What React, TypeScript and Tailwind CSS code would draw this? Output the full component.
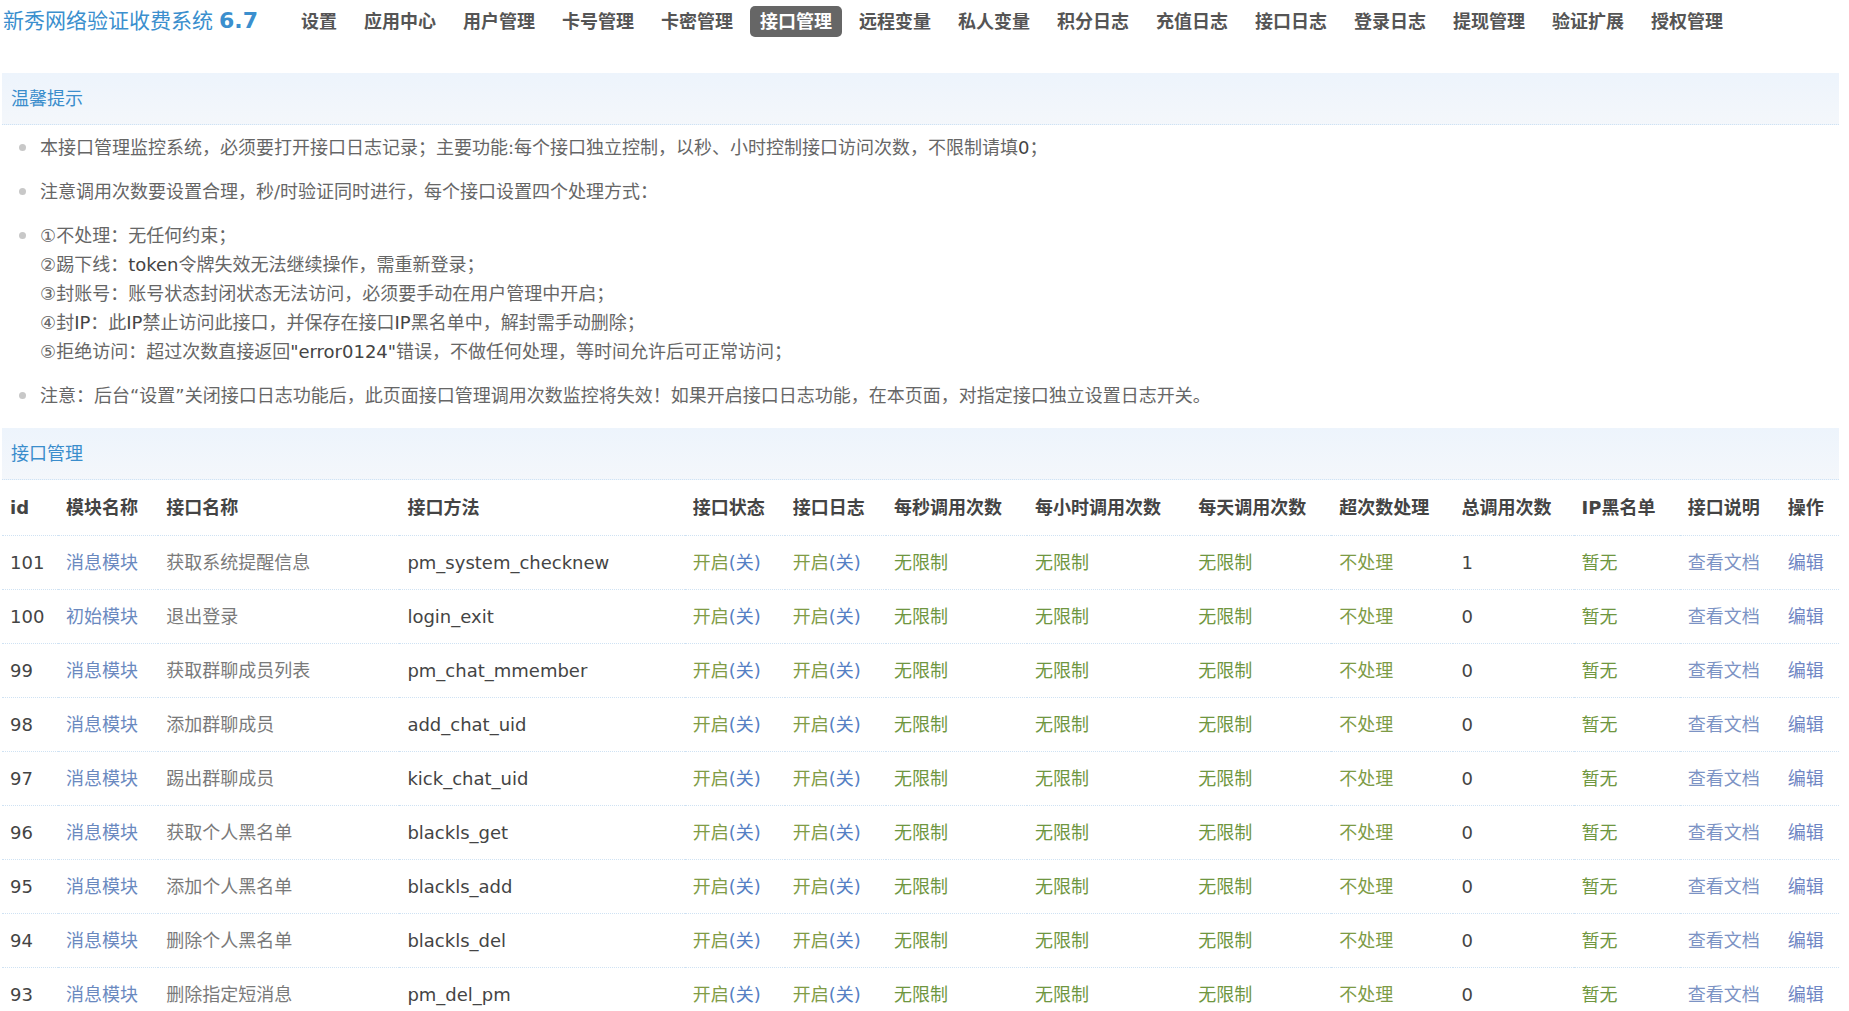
import React from "react";

const navItems = [
  "设置",
  "应用中心",
  "用户管理",
  "卡号管理",
  "卡密管理",
  "接口管理",
  "远程变量",
  "私人变量",
  "积分日志",
  "充值日志",
  "接口日志",
  "登录日志",
  "提现管理",
  "验证扩展",
  "授权管理",
];

const rows = [
  { id: 101, mod: "消息模块", name: "获取系统提醒信息", method: "pm_system_checknew", total: 1 },
  { id: 100, mod: "初始模块", name: "退出登录", method: "login_exit", total: 0 },
  { id: 99, mod: "消息模块", name: "获取群聊成员列表", method: "pm_chat_mmember", total: 0 },
  { id: 98, mod: "消息模块", name: "添加群聊成员", method: "add_chat_uid", total: 0 },
  { id: 97, mod: "消息模块", name: "踢出群聊成员", method: "kick_chat_uid", total: 0 },
  { id: 96, mod: "消息模块", name: "获取个人黑名单", method: "blackls_get", total: 0 },
  { id: 95, mod: "消息模块", name: "添加个人黑名单", method: "blackls_add", total: 0 },
  { id: 94, mod: "消息模块", name: "删除个人黑名单", method: "blackls_del", total: 0 },
  { id: 93, mod: "消息模块", name: "删除指定短消息", method: "pm_del_pm", total: 0 },
];

const headers = [
  "id",
  "模块名称",
  "接口名称",
  "接口方法",
  "接口状态",
  "接口日志",
  "每秒调用次数",
  "每小时调用次数",
  "每天调用次数",
  "超次数处理",
  "总调用次数",
  "IP黑名单",
  "接口说明",
  "操作",
];

function SectionTitle({ title }: { title: string }) {
  return (
    <div className="h-[52px] flex items-center pl-[9px] bg-gradient-to-b from-[#edf4fc] to-[#f4f7fb] border-b border-dotted border-[#cfe2f3] text-[18px] text-[#3a8dcc]">
      {title}
    </div>
  );
}

function Toggle() {
  return (
    <span>
      <span className="text-[#819c45]">开启</span>
      <span className="text-[#5580c4]">(关)</span>
    </span>
  );
}

function Dot() {
  return <span className="absolute left-[17px] top-[11px] w-[7px] h-[7px] rounded-full bg-[#c8c8c8]" />;
}

export default function App() {
  return (
    <div className="min-h-screen bg-white pl-[2px] pr-[10px] font-['DejaVu_Sans','Noto_Sans_CJK_SC',sans-serif] text-[18px] text-[#666]">
      <div className="h-[42px] flex items-center">
        <div className="pl-[1px] text-[#3b8fce] whitespace-nowrap">
          <span className="text-[21px]">新秀网络验证收费系统</span>
          <span className="ml-[6px] text-[22px] font-bold">6.7</span>
        </div>
        <nav className="ml-[33px] flex items-center gap-[7px]">
          {navItems.map((n) => (
            <span
              key={n}
              className={`h-[31px] px-[10px] flex items-center rounded-[5px] text-[18px] font-bold whitespace-nowrap ${
                n === "接口管理" ? "bg-[#666] text-white" : "text-[#555]"
              }`}
            >
              {n}
            </span>
          ))}
        </nav>
      </div>

      <div className="mt-[31px]">
        <SectionTitle title="温馨提示" />
        <ul className="pt-[8px] leading-[29px]">
          <li className="relative pl-[38px] mb-[15px]">
            <Dot />
            本接口管理监控系统，必须要打开接口日志记录；主要功能:每个接口独立控制，以秒、小时控制接口访问次数，不限制请填<span className="text-[#444]">0</span>；
          </li>
          <li className="relative pl-[38px] mb-[15px]">
            <Dot />
            注意调用次数要设置合理，秒/时验证同时进行，每个接口设置四个处理方式：
          </li>
          <li className="relative pl-[38px] mb-[15px]">
            <Dot />
            ①不处理：无任何约束；
            <br />
            ②踢下线：<span className="text-[#444]">token</span>令牌失效无法继续操作，需重新登录；
            <br />
            ③封账号：账号状态封闭状态无法访问，必须要手动在用户管理中开启；
            <br />
            ④封<span className="text-[#444]">IP</span>：此<span className="text-[#444]">IP</span>禁止访问此接口，并保存在接口<span className="text-[#444]">IP</span>黑名单中，解封需手动删除；
            <br />
            ⑤拒绝访问：超过次数直接返回<span className="text-[#444]">"error0124"</span>错误，不做任何处理，等时间允许后可正常访问；
          </li>
          <li className="relative pl-[38px]">
            <Dot />
            注意：后台“设置”关闭接口日志功能后，此页面接口管理调用次数监控将失效！如果开启接口日志功能，在本页面，对指定接口独立设置日志开关。
          </li>
        </ul>
      </div>

      <div className="mt-[18px]">
        <SectionTitle title="接口管理" />
        <table className="w-full table-fixed border-collapse">
          <colgroup>
            <col className="w-[56px]" />
            <col className="w-[100px]" />
            <col className="w-[241px]" />
            <col className="w-[285px]" />
            <col className="w-[100px]" />
            <col className="w-[101px]" />
            <col className="w-[141px]" />
            <col className="w-[163px]" />
            <col className="w-[141px]" />
            <col className="w-[122px]" />
            <col className="w-[120px]" />
            <col className="w-[106px]" />
            <col className="w-[100px]" />
            <col className="w-[59px]" />
          </colgroup>
          <thead>
            <tr className="h-[55px] border-b border-dotted border-[#cfe2f3]">
              {headers.map((h) => (
                <th key={h} className="pl-[8px] text-left font-bold text-[#444] whitespace-nowrap">
                  {h}
                </th>
              ))}
            </tr>
          </thead>
          <tbody>
            {rows.map((r) => (
              <tr key={r.id} className="h-[54px] border-b border-dotted border-[#cfe2f3] whitespace-nowrap">
                <td className="pl-[8px] text-[#444]">{r.id}</td>
                <td className="pl-[8px] text-[#6a89bf]">{r.mod}</td>
                <td className="pl-[8px] text-[#7a7a7a]">{r.name}</td>
                <td className="pl-[8px] text-[#444]">{r.method}</td>
                <td className="pl-[8px]">
                  <Toggle />
                </td>
                <td className="pl-[8px]">
                  <Toggle />
                </td>
                <td className="pl-[8px] text-[#6f9640]">无限制</td>
                <td className="pl-[8px] text-[#6f9640]">无限制</td>
                <td className="pl-[8px] text-[#6f9640]">无限制</td>
                <td className="pl-[8px] text-[#7d9b45]">不处理</td>
                <td className="pl-[8px] text-[#444]">{r.total}</td>
                <td className="pl-[8px] text-[#6f9640]">暂无</td>
                <td className="pl-[8px] text-[#7c93c4]">查看文档</td>
                <td className="pl-[8px] text-[#6f86c4]">编辑</td>
              </tr>
            ))}
          </tbody>
        </table>
      </div>
    </div>
  );
}
